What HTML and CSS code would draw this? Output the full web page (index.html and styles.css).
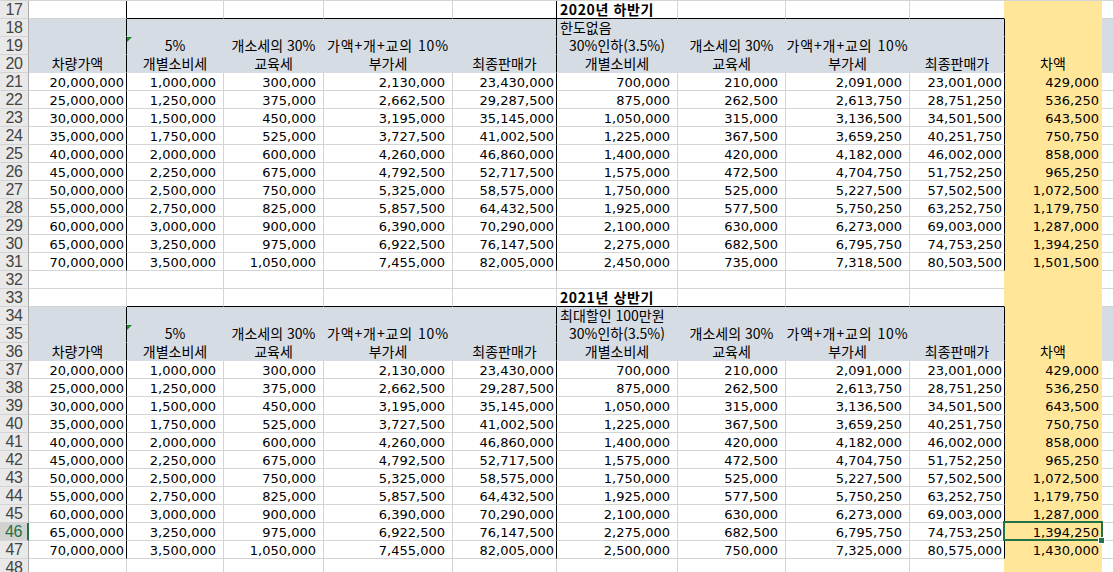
FILE: index.html
```html
<!DOCTYPE html>
<html lang="ko">
<head>
<meta charset="utf-8">
<title>개별소비세 비교</title>
<link rel="stylesheet" href="styles.css">
</head>
<body>
<div class="sheet">
  <div class="row ttl side"><div>17</div><div></div><div></div><div></div><div></div><div></div><div class="title">2020년 하반기</div><div></div><div></div><div></div><div></div><div></div></div>
  <div class="row hdr blk"><div>18</div><div></div><div></div><div></div><div></div><div></div><div class="l">한도없음</div><div></div><div></div><div></div><div></div><div></div></div>
  <div class="row hdr blk"><div>19</div><div></div><div class="tri">5%</div><div>개소세의 30%</div><div class="wide">가액+개+교의 10%</div><div></div><div>30%인하(3.5%)</div><div>개소세의 30%</div><div class="wide">가액+개+교의 10%</div><div></div><div></div><div></div></div>
  <div class="row hdr blk"><div>20</div><div>차량가액</div><div>개별소비세</div><div>교육세</div><div>부가세</div><div>최종판매가</div><div>개별소비세</div><div>교육세</div><div>부가세</div><div>최종판매가</div><div>차액</div><div></div></div>
  <div class="row blk"><div>21</div><div>20,000,000</div><div>1,000,000</div><div>300,000</div><div>2,130,000</div><div>23,430,000</div><div>700,000</div><div>210,000</div><div>2,091,000</div><div>23,001,000</div><div>429,000</div><div></div></div>
  <div class="row blk"><div>22</div><div>25,000,000</div><div>1,250,000</div><div>375,000</div><div>2,662,500</div><div>29,287,500</div><div>875,000</div><div>262,500</div><div>2,613,750</div><div>28,751,250</div><div>536,250</div><div></div></div>
  <div class="row blk"><div>23</div><div>30,000,000</div><div>1,500,000</div><div>450,000</div><div>3,195,000</div><div>35,145,000</div><div>1,050,000</div><div>315,000</div><div>3,136,500</div><div>34,501,500</div><div>643,500</div><div></div></div>
  <div class="row blk"><div>24</div><div>35,000,000</div><div>1,750,000</div><div>525,000</div><div>3,727,500</div><div>41,002,500</div><div>1,225,000</div><div>367,500</div><div>3,659,250</div><div>40,251,750</div><div>750,750</div><div></div></div>
  <div class="row blk"><div>25</div><div>40,000,000</div><div>2,000,000</div><div>600,000</div><div>4,260,000</div><div>46,860,000</div><div>1,400,000</div><div>420,000</div><div>4,182,000</div><div>46,002,000</div><div>858,000</div><div></div></div>
  <div class="row blk"><div>26</div><div>45,000,000</div><div>2,250,000</div><div>675,000</div><div>4,792,500</div><div>52,717,500</div><div>1,575,000</div><div>472,500</div><div>4,704,750</div><div>51,752,250</div><div>965,250</div><div></div></div>
  <div class="row blk"><div>27</div><div>50,000,000</div><div>2,500,000</div><div>750,000</div><div>5,325,000</div><div>58,575,000</div><div>1,750,000</div><div>525,000</div><div>5,227,500</div><div>57,502,500</div><div>1,072,500</div><div></div></div>
  <div class="row blk"><div>28</div><div>55,000,000</div><div>2,750,000</div><div>825,000</div><div>5,857,500</div><div>64,432,500</div><div>1,925,000</div><div>577,500</div><div>5,750,250</div><div>63,252,750</div><div>1,179,750</div><div></div></div>
  <div class="row blk"><div>29</div><div>60,000,000</div><div>3,000,000</div><div>900,000</div><div>6,390,000</div><div>70,290,000</div><div>2,100,000</div><div>630,000</div><div>6,273,000</div><div>69,003,000</div><div>1,287,000</div><div></div></div>
  <div class="row blk"><div>30</div><div>65,000,000</div><div>3,250,000</div><div>975,000</div><div>6,922,500</div><div>76,147,500</div><div>2,275,000</div><div>682,500</div><div>6,795,750</div><div>74,753,250</div><div>1,394,250</div><div></div></div>
  <div class="row blk"><div>31</div><div>70,000,000</div><div>3,500,000</div><div>1,050,000</div><div>7,455,000</div><div>82,005,000</div><div>2,450,000</div><div>735,000</div><div>7,318,500</div><div>80,503,500</div><div>1,501,500</div><div></div></div>
  <div class="row"><div>32</div><div></div><div></div><div></div><div></div><div></div><div></div><div></div><div></div><div></div><div></div><div></div></div>
  <div class="row ttl"><div>33</div><div></div><div></div><div></div><div></div><div></div><div class="title">2021년 상반기</div><div></div><div></div><div></div><div></div><div></div></div>
  <div class="row hdr blk"><div>34</div><div></div><div></div><div></div><div></div><div></div><div class="l">최대할인 100만원</div><div></div><div></div><div></div><div></div><div></div></div>
  <div class="row hdr blk"><div>35</div><div></div><div class="tri">5%</div><div>개소세의 30%</div><div class="wide">가액+개+교의 10%</div><div></div><div>30%인하(3.5%)</div><div>개소세의 30%</div><div class="wide">가액+개+교의 10%</div><div></div><div></div><div></div></div>
  <div class="row hdr blk"><div>36</div><div>차량가액</div><div>개별소비세</div><div>교육세</div><div>부가세</div><div>최종판매가</div><div>개별소비세</div><div>교육세</div><div>부가세</div><div>최종판매가</div><div>차액</div><div></div></div>
  <div class="row blk"><div>37</div><div>20,000,000</div><div>1,000,000</div><div>300,000</div><div>2,130,000</div><div>23,430,000</div><div>700,000</div><div>210,000</div><div>2,091,000</div><div>23,001,000</div><div>429,000</div><div></div></div>
  <div class="row blk"><div>38</div><div>25,000,000</div><div>1,250,000</div><div>375,000</div><div>2,662,500</div><div>29,287,500</div><div>875,000</div><div>262,500</div><div>2,613,750</div><div>28,751,250</div><div>536,250</div><div></div></div>
  <div class="row blk"><div>39</div><div>30,000,000</div><div>1,500,000</div><div>450,000</div><div>3,195,000</div><div>35,145,000</div><div>1,050,000</div><div>315,000</div><div>3,136,500</div><div>34,501,500</div><div>643,500</div><div></div></div>
  <div class="row blk"><div>40</div><div>35,000,000</div><div>1,750,000</div><div>525,000</div><div>3,727,500</div><div>41,002,500</div><div>1,225,000</div><div>367,500</div><div>3,659,250</div><div>40,251,750</div><div>750,750</div><div></div></div>
  <div class="row blk"><div>41</div><div>40,000,000</div><div>2,000,000</div><div>600,000</div><div>4,260,000</div><div>46,860,000</div><div>1,400,000</div><div>420,000</div><div>4,182,000</div><div>46,002,000</div><div>858,000</div><div></div></div>
  <div class="row blk"><div>42</div><div>45,000,000</div><div>2,250,000</div><div>675,000</div><div>4,792,500</div><div>52,717,500</div><div>1,575,000</div><div>472,500</div><div>4,704,750</div><div>51,752,250</div><div>965,250</div><div></div></div>
  <div class="row blk"><div>43</div><div>50,000,000</div><div>2,500,000</div><div>750,000</div><div>5,325,000</div><div>58,575,000</div><div>1,750,000</div><div>525,000</div><div>5,227,500</div><div>57,502,500</div><div>1,072,500</div><div></div></div>
  <div class="row blk"><div>44</div><div>55,000,000</div><div>2,750,000</div><div>825,000</div><div>5,857,500</div><div>64,432,500</div><div>1,925,000</div><div>577,500</div><div>5,750,250</div><div>63,252,750</div><div>1,179,750</div><div></div></div>
  <div class="row blk"><div>45</div><div>60,000,000</div><div>3,000,000</div><div>900,000</div><div>6,390,000</div><div>70,290,000</div><div>2,100,000</div><div>630,000</div><div>6,273,000</div><div>69,003,000</div><div>1,287,000</div><div></div></div>
  <div class="row blk"><div class="selh">46</div><div>65,000,000</div><div>3,250,000</div><div>975,000</div><div>6,922,500</div><div>76,147,500</div><div>2,275,000</div><div>682,500</div><div>6,795,750</div><div>74,753,250</div><div class="cur">1,394,250</div><div></div></div>
  <div class="row blk"><div>47</div><div>70,000,000</div><div>3,500,000</div><div>1,050,000</div><div>7,455,000</div><div>82,005,000</div><div>2,500,000</div><div>750,000</div><div>7,325,000</div><div>80,575,000</div><div>1,430,000</div><div></div></div>
  <div class="row"><div>48</div><div></div><div></div><div></div><div></div><div></div><div></div><div></div><div></div><div></div><div></div><div></div></div>
</div>
</body>
</html>
```

FILE: styles.css
```css
html, body {
  margin: 0;
  padding: 0;
  background: #fff;
  overflow: hidden;
}

.sheet {
  display: flex;
  flex-direction: column;
  width: 1114px;
  border-top: 1px solid #d4d4d4;
}

.row {
  display: grid;
  grid-template-columns: 29px 98px 97px 100px 129px 104px 121px 108px 124px 95px 97px 12px;
  height: 18px;
}

.row > div {
  box-sizing: border-box;
  min-width: 0;
  height: 18px;
  border-right: 1px solid #d4d4d4;
  border-bottom: 1px solid #d4d4d4;
  padding: 2px 2px 0 0;
  font: 13px/15px "DejaVu Sans", "Noto Sans CJK KR", sans-serif;
  color: #000;
  text-align: right;
  white-space: nowrap;
}

/* accounting-style columns keep a wider right gap */
.row > div:nth-child(3),
.row > div:nth-child(4),
.row > div:nth-child(5),
.row > div:nth-child(7),
.row > div:nth-child(8),
.row > div:nth-child(9) {
  padding-right: 7px;
}

.row > div:nth-child(10) {
  border-right-color: #ffe699;
}

/* 차액 column */
.row > div:nth-child(11) {
  background: #ffe699;
  border-color: #ffe699;
}

/* header band */
.row.hdr {
  background: #d6dce4;
}

.row.hdr > div {
  border-color: transparent;
  padding: 1px 0 0 0;
  font: 14px/15px "Noto Sans CJK KR", sans-serif;
  text-align: center;
}

.row.hdr > div.wide {
  letter-spacing: 0.9px;
}

/* row number column */
.row > div:nth-child(1) {
  background: #e9e9e9;
  border-right-color: #ababab;
  border-bottom-color: #d4d4d4;
  padding: 1px 0 0 0;
  font: 16px/16px "Liberation Sans", sans-serif;
  letter-spacing: -0.3px;
  color: #444;
  text-align: center;
}

.row > div.selh {
  background: #d2d2d2;
  color: #217346;
  border-right: 2px solid #217346;
}

/* block outlines */
.row.blk > div:nth-child(2),
.row.blk > div:nth-child(6),
.row.blk > div:nth-child(10),
.row.side > div:nth-child(2),
.row.side > div:nth-child(6) {
  border-right-color: #000;
}

.row.ttl > div:nth-child(n+3):nth-child(-n+10) {
  border-bottom-color: #000;
}

.row > div.l {
  text-align: left;
  padding-left: 3px;
}

.row > div.title {
  text-align: left;
  padding: 1px 0 0 3px;
  font: bold 14px/15px "Noto Sans CJK KR", sans-serif;
  letter-spacing: 0.6px;
}

/* green error indicator */
.row > div.tri {
  position: relative;
}

.row > div.tri::before {
  content: "";
  position: absolute;
  left: 0;
  top: 0;
  border-top: 5px solid #1f8a1f;
  border-right: 5px solid transparent;
}

/* active cell */
.row > div.cur {
  position: relative;
}

.row > div.cur::after {
  content: "";
  position: absolute;
  left: -2px;
  right: -2px;
  top: -2px;
  bottom: -1px;
  border: 2px solid #217346;
}

.row > div.cur::before {
  content: "";
  position: absolute;
  right: -4px;
  bottom: -4px;
  width: 5px;
  height: 5px;
  background: #217346;
  border: 1px solid #fff;
  z-index: 1;
}
```
